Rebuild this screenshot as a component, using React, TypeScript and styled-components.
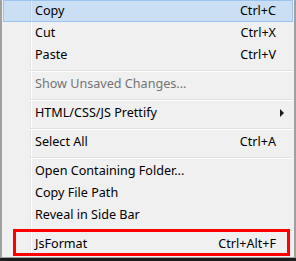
import React from 'react'
import styled, { createGlobalStyle } from 'styled-components'

type Entry =
    | { kind: 'item'; label: string; shortcut?: string; disabled?: boolean; active?: boolean; submenu?: boolean }
    | { kind: 'sep' }

const ENTRIES: Entry[] = [
    { kind: 'item', label: 'Copy', shortcut: 'Ctrl+C', active: true },
    { kind: 'item', label: 'Cut', shortcut: 'Ctrl+X' },
    { kind: 'item', label: 'Paste', shortcut: 'Ctrl+V' },
    { kind: 'sep' },
    { kind: 'item', label: 'Show Unsaved Changes...', disabled: true },
    { kind: 'sep' },
    { kind: 'item', label: 'HTML/CSS/JS Prettify', submenu: true },
    { kind: 'sep' },
    { kind: 'item', label: 'Select All', shortcut: 'Ctrl+A' },
    { kind: 'sep' },
    { kind: 'item', label: 'Open Containing Folder...' },
    { kind: 'item', label: 'Copy File Path' },
    { kind: 'item', label: 'Reveal in Side Bar' },
    { kind: 'sep' },
    { kind: 'item', label: 'JsFormat', shortcut: 'Ctrl+Alt+F' },
]

const GlobalStyle = createGlobalStyle`
    html, body {
        margin: 0;
        padding: 0;
        background: #1c1c1c;
    }
    body {
        font-family: "Noto Sans", "Open Sans", sans-serif;
        font-size: 12.6px;
    }
`

const App: React.FC = () => {
    return (
        <>
            <GlobalStyle />
            <Menu>
                <List>
                    {ENTRIES.map((e, i) =>
                        e.kind === 'sep'
                            ? <Separator key={i} />
                            : (
                                <Row key={i} $active={e.active} $disabled={e.disabled}>
                                    <Gutter />
                                    <Label>{e.label}</Label>
                                    <Shortcut>{e.shortcut || ''}</Shortcut>
                                    <ArrowCell>{e.submenu && <Arrow />}</ArrowCell>
                                </Row>
                            )
                    )}
                </List>
                {/* annotation drawn over the last entry */}
                <Highlight />
            </Menu>
        </>
    )
}

export default App

const Menu = styled.div`
    position: relative;
    width: 296px;
    box-sizing: border-box;
    background: #f0f0f0;
    border-left: 2px solid #a0a0a0;
    border-right: 2px solid #a0a0a0;
    border-bottom: 1px solid #a0a0a0;
    padding: 0 1px 2px 1px;
`

const List = styled.div`
    display: flex;
    flex-direction: column;
    background: linear-gradient(
        to right,
        transparent 27px,
        #e2e3e3 27px,
        #e2e3e3 28px,
        #ffffff 28px,
        #ffffff 29px,
        transparent 29px
    );
`

const Row = styled.div<{ $active?: boolean; $disabled?: boolean }>`
    display: grid;
    grid-template-columns: 27px 1fr auto 16px;
    align-items: center;
    height: 22px;
    box-sizing: border-box;
    color: ${p => (p.$disabled ? '#747474' : '#000')};
    background: ${p => (p.$active ? 'rgba(51, 153, 255, 0.2)' : 'transparent')};
    border: 1px solid ${p => (p.$active ? '#99c5f0' : 'transparent')};
    line-height: 20px;
`

const Gutter = styled.span``

const Label = styled.span`
    padding-left: 4px;
    white-space: nowrap;
`

const Shortcut = styled.span`
    white-space: nowrap;
`

const ArrowCell = styled.span`
    display: flex;
    align-items: center;
    padding-left: 4px;
`

const Arrow = styled.span`
    width: 0;
    height: 0;
    border-top: 4px solid transparent;
    border-bottom: 4px solid transparent;
    border-left: 4px solid #1a1a1a;
`

const Separator = styled.div`
    margin-left: 27px;
    height: 7px;
    box-sizing: border-box;
    padding-top: 4px;
    &::before {
        content: '';
        display: block;
        height: 1px;
        background: #e0e0e0;
        border-bottom: 1px solid #ffffff;
    }
`

const Highlight = styled.div`
    position: absolute;
    left: 11px;
    top: 229px;
    width: 277px;
    height: 27px;
    box-sizing: border-box;
    border: 3px solid #ff0000;
    pointer-events: none;
`
